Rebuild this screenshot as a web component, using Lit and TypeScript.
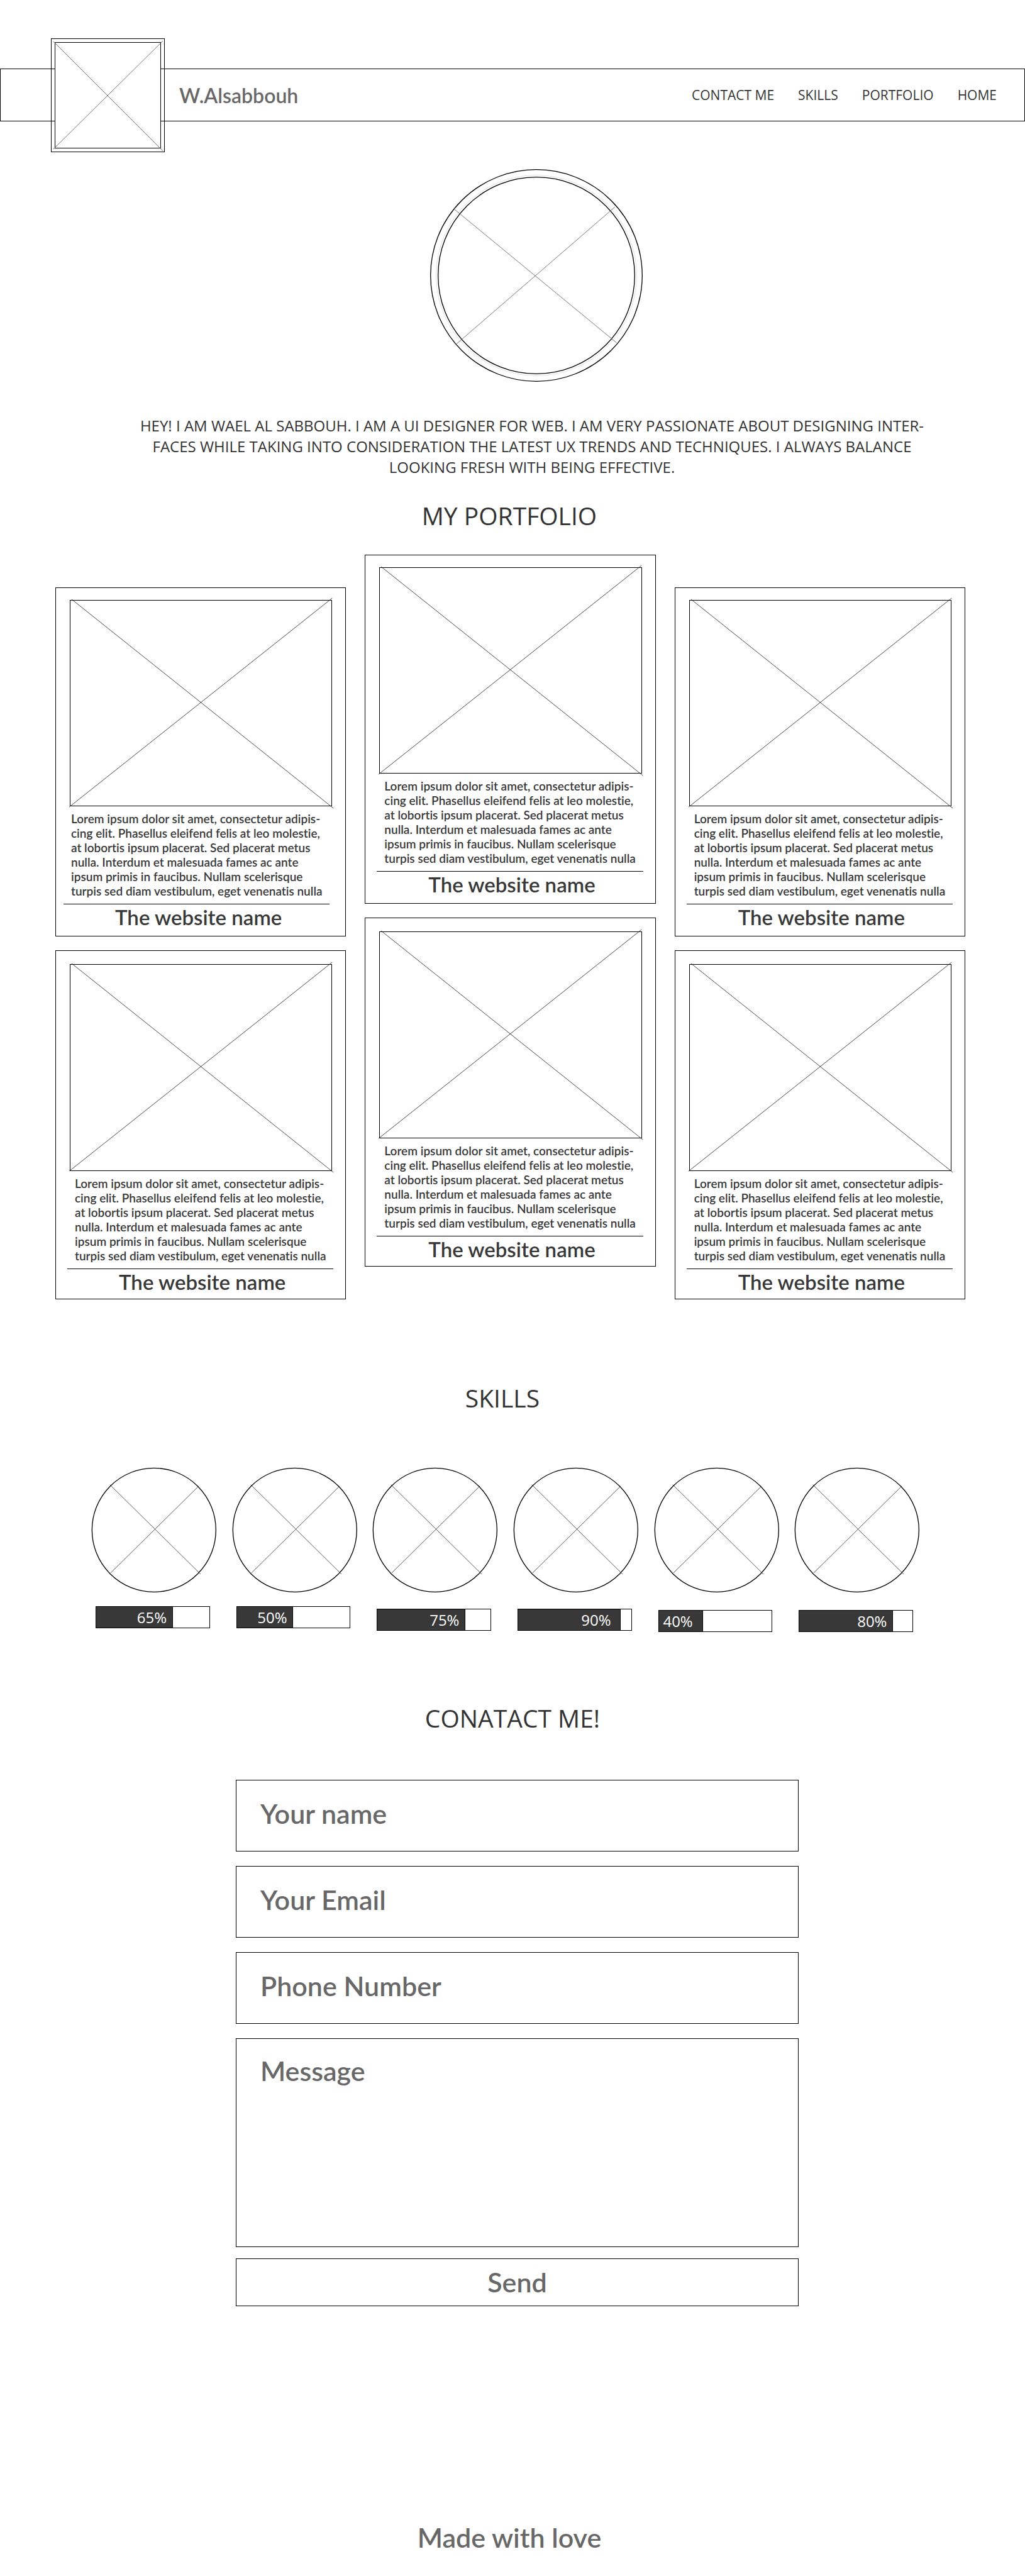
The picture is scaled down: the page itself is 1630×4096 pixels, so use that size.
import { LitElement, html, css, svg } from "lit";
import { customElement, property } from "lit/decorators.js";
import { classMap } from "lit/directives/class-map.js";
import { styleMap } from "lit/directives/style-map.js";

interface Skill {
  label: string;
  fill: number;
  drop: "none" | "small" | "large";
  inset: "near" | "far";
}

interface Field {
  id: string;
  label: string;
  type: string;
}

const NAV = [
  { label: "CONTACT ME", href: "#contact" },
  { label: "SKILLS", href: "#skills" },
  { label: "PORTFOLIO", href: "#portfolio" },
  { label: "HOME", href: "#home" },
];

const SKILLS: Skill[] = [
  { label: "65%", fill: 68, drop: "none", inset: "near" },
  { label: "50%", fill: 50, drop: "none", inset: "near" },
  { label: "75%", fill: 78, drop: "small", inset: "near" },
  { label: "90%", fill: 91, drop: "small", inset: "far" },
  { label: "40%", fill: 39, drop: "large", inset: "far" },
  { label: "80%", fill: 83, drop: "large", inset: "near" },
];

const FIELDS: Field[] = [
  { id: "name", label: "Your name", type: "text" },
  { id: "email", label: "Your Email", type: "email" },
  { id: "phone", label: "Phone Number", type: "tel" },
];

const BLURB = [
  "Lorem ipsum dolor sit amet, consectetur adipis-",
  "cing elit. Phasellus eleifend felis at leo molestie,",
  "at lobortis ipsum placerat. Sed placerat metus",
  "nulla. Interdum et malesuada fames ac ante",
  "ipsum primis in faucibus. Nullam scelerisque",
  "turpis sed diam vestibulum, eget venenatis nulla",
];

const INTRO = [
  "HEY! I AM WAEL AL SABBOUH. I AM A UI DESIGNER FOR WEB. I AM VERY PASSIONATE ABOUT DESIGNING INTER-",
  "FACES WHILE TAKING INTO CONSIDERATION THE LATEST UX TRENDS AND TECHNIQUES. I ALWAYS BALANCE",
  "LOOKING FRESH WITH BEING EFFECTIVE.",
];

/** One portfolio entry: picture placeholder, description and site name. */
@customElement("portfolio-card")
export class PortfolioCard extends LitElement {
  @property({ type: Boolean }) lower = false;
  @property({ type: Boolean }) outdent = false;

  static styles = css`
    :host {
      display: block;
    }
    .card {
      border: 1px solid #000;
      padding: 19px 0 10px;
      font-family: Lato, "Open Sans", sans-serif;
      color: #383838;
    }
    .card.lower {
      padding: 21px 0 7px;
    }
    .frame {
      box-sizing: border-box;
      margin: 0 21px 0 22px;
      border: 1px solid #000;
      aspect-ratio: 417 / 328;
    }
    .cross {
      display: block;
      width: 100%;
      height: 100%;
      overflow: visible;
      fill: none;
      stroke: #1c1c1c;
      stroke-width: 0.8;
    }
    .caption {
      margin: 8px 19px 0 18px;
    }
    .outdent .caption {
      margin: 8px 25px 0 12px;
    }
    .blurb {
      margin: 0;
      padding: 0 0 9px 12px;
      font-size: 19px;
      font-weight: 600;
      font-variant-ligatures: none;
      line-height: 23px;
      white-space: nowrap;
    }
    .title {
      margin: 0;
      padding-left: 6px;
      border-top: 1px solid #000;
      font-size: 33px;
      font-weight: 600;
      line-height: 40px;
      text-align: center;
    }
  `;

  render() {
    return html`
      <article class=${classMap({ card: true, lower: this.lower, outdent: this.outdent })}>
        <div class="frame">
          <svg class="cross" viewBox="0 0 415 326" preserveAspectRatio="none" aria-hidden="true">
            <path d="M2-2 418 330M416-4-2 328" />
          </svg>
        </div>
        <div class="caption">
          <p class="blurb">${BLURB.map((line, i) => html`${i ? html`<br />` : ""}${line}`)}</p>
          <h3 class="title">The website name</h3>
        </div>
      </article>
    `;
  }
}

/** Round skill placeholder with its level bar. */
@customElement("skill-meter")
export class SkillMeter extends LitElement {
  @property({ attribute: false }) skill!: Skill;

  static styles = css`
    :host {
      display: block;
    }
    .badge {
      display: block;
      width: 100%;
      overflow: visible;
      fill: none;
    }
    .ring {
      stroke: #000;
      stroke-width: 2;
    }
    .cross {
      stroke: #1c1c1c;
      stroke-width: 1.1;
    }
    .level {
      padding: 23px 10px 0 6px;
    }
    .level.small {
      padding-top: 27px;
    }
    .level.large {
      padding-top: 29px;
    }
    .bar {
      box-sizing: border-box;
      height: 35px;
      border: 1px solid #000;
      background: #fff;
    }
    .fill {
      box-sizing: border-box;
      height: 100%;
      padding-right: 9px;
      border-right: 1px solid #000;
      background: #383838;
      color: #fff;
      font-family: "Open Sans", sans-serif;
      font-size: 24px;
      line-height: 33px;
      text-align: right;
    }
    .fill.far {
      padding-right: 15px;
    }
  `;

  render() {
    const { label, fill, drop, inset } = this.skill;
    return html`
      <svg class="badge" viewBox="0 0 300 300" aria-hidden="true">
        ${svg`<circle class="ring" cx="150" cy="150" r="149.5" />
        <path class="cross" d="M43.500 40.500 262.500 256.500M257.500 44.500 45.500 253.500" />`}
      </svg>
      <div class=${classMap({ level: true, [drop]: true })}>
        <div class="bar" role="progressbar" aria-label="Skill level" aria-valuenow=${parseInt(label, 10)}>
          <div class=${classMap({ fill: true, [inset]: true })} style=${styleMap({ width: `${fill}%` })}>${label}</div>
        </div>
      </div>
    `;
  }
}

@customElement("app-root")
export class AppRoot extends LitElement {
  static styles = css`
    :host {
      display: block;
      background: #fff;
      color: #333;
      font-family: "Open Sans", sans-serif;
    }
    .top {
      padding-top: 109px;
    }
    .bar {
      box-sizing: border-box;
      display: flex;
      align-items: center;
      height: 84px;
      padding: 0 44px 0 80px;
      border: 1px solid #000;
    }
    .logo {
      box-sizing: border-box;
      flex: none;
      width: 181px;
      height: 181px;
      padding: 5px;
      border: 1px solid #000;
    }
    .logo-inner {
      box-sizing: border-box;
      height: 100%;
      border: 1px solid #000;
      background: #fff;
    }
    .logo-cross {
      display: block;
      width: 100%;
      height: 100%;
      overflow: visible;
      fill: none;
      stroke: #555;
      stroke-width: 0.8;
    }
    .brand {
      margin-left: 23px;
      color: #686868;
      font-family: Lato, "Open Sans", sans-serif;
      font-size: 32px;
      font-weight: 600;
      text-decoration: none;
    }
    .nav {
      display: flex;
      gap: 38px;
      margin-left: auto;
      font-size: 21px;
    }
    .nav a {
      color: #333;
      text-decoration: none;
    }
    .hero {
      display: flex;
      flex-direction: column;
      align-items: center;
      gap: 53px;
      padding: 76px 0 0 62px;
    }
    .portrait {
      display: block;
      width: 338px;
      height: 338px;
      margin-left: 14px;
      fill: none;
    }
    .ring {
      stroke: #000;
      stroke-width: 1.3;
    }
    .halo {
      stroke: #d4d4d4;
      stroke-width: 0.7;
    }
    .portrait-cross {
      stroke: #555;
      stroke-width: 0.8;
    }
    .intro {
      margin: 0;
      font-size: 24px;
      line-height: 33px;
      text-align: center;
    }
    .heading {
      margin: 0;
      font-size: 39px;
      font-weight: 400;
      line-height: 46px;
      text-align: center;
    }
    .portfolio {
      padding-top: 38px;
    }
    .portfolio .heading {
      padding-right: 10px;
    }
    .columns {
      display: grid;
      grid-template-columns: repeat(3, minmax(0, 1fr));
      gap: 30px;
      padding: 39px 95px 0 88px;
    }
    .column {
      display: flex;
      flex-direction: column;
      gap: 22px;
    }
    .column.side {
      padding-top: 52px;
    }
    .skills {
      padding-top: 134px;
    }
    .skills .heading {
      padding-right: 32px;
    }
    .meters {
      display: grid;
      grid-template-columns: repeat(6, minmax(0, 1fr));
      gap: 26px;
      padding: 88px 168px 0 146px;
    }
    .contact {
      padding-top: 114px;
    }
    .form {
      display: flex;
      flex-direction: column;
      padding: 75px 360px 0 375px;
    }
    .control {
      box-sizing: border-box;
      width: 100%;
      margin: 0 0 23px;
      padding: 0 38px;
      border: 1px solid #000;
      border-radius: 0;
      background: #fff;
      color: #686868;
      font-family: Lato, "Open Sans", sans-serif;
      font-size: 43px;
      font-weight: 600;
      line-height: 52px;
    }
    .control::placeholder {
      color: #686868;
      opacity: 1;
    }
    .field {
      height: 114px;
      padding-bottom: 7px;
    }
    .message {
      display: block;
      height: 332px;
      margin-bottom: 18px;
      padding-top: 25px;
      resize: none;
    }
    .send {
      height: 76px;
      margin-bottom: 0;
      cursor: pointer;
    }
    .footer {
      padding: 342px 10px 35px 0;
      color: #686868;
      font-family: Lato, "Open Sans", sans-serif;
      font-size: 43px;
      font-weight: 600;
      line-height: 52px;
      text-align: center;
    }
  `;

  render() {
    return html`
      <header class="top" id="home">
        <div class="bar">
          <div class="logo">
            <div class="logo-inner">
              <svg class="logo-cross" viewBox="0 0 167 167" aria-hidden="true">
                <path d="M-3-2 171 172M171-3-3 169" />
              </svg>
            </div>
          </div>
          <a class="brand" href="#home">W.Alsabbouh</a>
          <nav class="nav">${NAV.map((item) => html`<a href=${item.href}>${item.label}</a>`)}</nav>
        </div>
      </header>
      <main>
        <section class="hero">
          <svg class="portrait" viewBox="0 0 338 338" aria-hidden="true">
            <circle class="ring" cx="169" cy="169" r="168.300" />
            <circle class="halo" cx="169" cy="169" r="159.500" />
            <circle class="ring" cx="169" cy="169" r="156.300" />
            <path class="portrait-cross" d="M38 63.300 296.700 276.200M293.700 60.300 41.300 278.400" />
          </svg>
          <p class="intro">${INTRO.map((line, i) => html`${i ? html`<br />` : ""}${line}`)}</p>
        </section>
        <section class="portfolio" id="portfolio">
          <h2 class="heading">MY PORTFOLIO</h2>
          <div class="columns">
            ${[0, 1, 2].map(
              (col) => html`
                <div class=${classMap({ column: true, side: col !== 1 })}>
                  <portfolio-card ?outdent=${col === 0}></portfolio-card>
                  <portfolio-card lower></portfolio-card>
                </div>
              `
            )}
          </div>
        </section>
        <section class="skills" id="skills">
          <h2 class="heading">SKILLS</h2>
          <div class="meters">
            ${SKILLS.map((skill) => html`<skill-meter .skill=${skill}></skill-meter>`)}
          </div>
        </section>
        <section class="contact" id="contact">
          <h2 class="heading">CONATACT ME!</h2>
          <form class="form" @submit=${(e: Event) => e.preventDefault()}>
            ${FIELDS.map(
              (f) => html`<input class="control field" id=${f.id} name=${f.id} type=${f.type} placeholder=${f.label} aria-label=${f.label} />`
            )}
            <textarea class="control message" id="message" name="message" placeholder="Message" aria-label="Message"></textarea>
            <button class="control send" type="submit">Send</button>
          </form>
        </section>
      </main>
      <footer class="footer">Made with love</footer>
    `;
  }
}
